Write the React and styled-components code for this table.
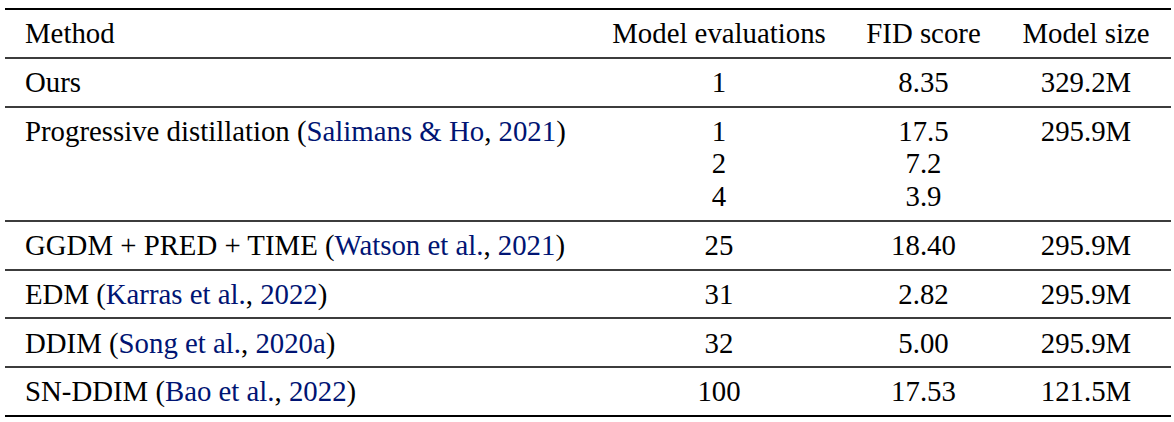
import React from 'react'
import styled, { createGlobalStyle } from 'styled-components'

const GlobalStyle = createGlobalStyle`
  html, body {
    margin: 0;
    padding: 0;
    background: #ffffff;
  }
  body {
    font-family: 'Liberation Serif', 'Times New Roman', serif;
    color: #000;
  }
`

const Page = styled.div`
  padding: 8px 0 0 5px;
`

const Table = styled.table`
  width: 1166px;
  table-layout: fixed;
  border-collapse: separate;
  border-spacing: 0;
  border-top: 2px solid #000;
  border-bottom: 2px solid #000;
  font-size: 28.8px;
  line-height: 32.5px;
`

const Row = styled.tr`
  & > td, & > th {
    border-bottom: ${(p) => (p.$last ? 'none' : '2px solid #3c3c3c')};
  }
`

const Cell = styled.td`
  padding: 7.2px 20px;
  text-align: ${(p) => (p.$left ? 'left' : 'center')};
  vertical-align: top;
  font-weight: normal;
  white-space: nowrap;
`

const Cite = styled.span`
  color: #001473;
`

const Stack = ({ items }) => (
  <>
    {items.map((v, i) => (
      <div key={i}>{v}</div>
    ))}
  </>
)

const rows = [
  { method: 'Ours', evals: ['1'], fid: ['8.35'], size: '329.2M' },
  {
    method: 'Progressive distillation',
    cite: ['Salimans & Ho', '2021'],
    evals: ['1', '2', '4'],
    fid: ['17.5', '7.2', '3.9'],
    size: '295.9M'
  },
  { method: 'GGDM + PRED + TIME', cite: ['Watson et al.', '2021'], evals: ['25'], fid: ['18.40'], size: '295.9M' },
  { method: 'EDM', cite: ['Karras et al.', '2022'], evals: ['31'], fid: ['2.82'], size: '295.9M' },
  { method: 'DDIM', cite: ['Song et al.', '2020a'], evals: ['32'], fid: ['5.00'], size: '295.9M' },
  { method: 'SN-DDIM', cite: ['Bao et al.', '2022'], evals: ['100'], fid: ['17.53'], size: '121.5M' }
]

export default function App() {
  return (
    <Page>
      <GlobalStyle />
      <Table>
        <colgroup>
          <col style={{ width: 587 }} />
          <col style={{ width: 254 }} />
          <col style={{ width: 155 }} />
          <col style={{ width: 170 }} />
        </colgroup>
        <thead>
          <Row>
            <Cell as="th" $left>Method</Cell>
            <Cell as="th">Model evaluations</Cell>
            <Cell as="th">FID score</Cell>
            <Cell as="th">Model size</Cell>
          </Row>
        </thead>
        <tbody>
          {rows.map((r, i) => (
            <Row key={r.method} $last={i === rows.length - 1}>
              <Cell $left>
                {r.method}
                {r.cite && (
                  <>
                    {' '}(<Cite>{r.cite[0]}</Cite>, <Cite>{r.cite[1]}</Cite>)
                  </>
                )}
              </Cell>
              <Cell><Stack items={r.evals} /></Cell>
              <Cell><Stack items={r.fid} /></Cell>
              <Cell>{r.size}</Cell>
            </Row>
          ))}
        </tbody>
      </Table>
    </Page>
  )
}
